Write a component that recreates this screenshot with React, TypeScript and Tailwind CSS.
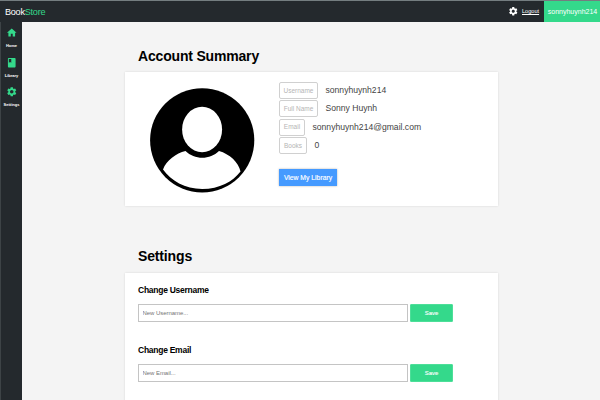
import { MdBook, MdHome, MdSettings } from "react-icons/md";

const nav = [
  { label: "Home", Icon: MdHome },
  { label: "Library", Icon: MdBook },
  { label: "Settings", Icon: MdSettings },
];

const details = [
  { label: "Username", value: "sonnyhuynh214", box: "w-[39px]" },
  { label: "Full Name", value: "Sonny Huynh", box: "w-[39px]" },
  { label: "Email", value: "sonnyhuynh214@gmail.com", box: "w-[26px]" },
  { label: "Books", value: "0", box: "w-[28px]" },
];

function Avatar() {
  return (
    <svg viewBox="0 0 105 105" className="ml-[25px] mt-[16px] size-[105px] shrink-0">
      <circle cx="52.2" cy="52.3" r="52.1" fill="#000" />
      <ellipse cx="52.1" cy="41.5" rx="20" ry="22.7" fill="#fff" />
      <path
        d="M35.5 63 C26 65.5 16.5 72 13 81.5 C21 92.5 35 101 52.2 101 C69.5 101 83 93.5 90.5 83.5 C88.5 74 79.5 66 69 63 C60 72 44.5 72 35.5 63 Z"
        fill="#fff"
      />
    </svg>
  );
}

function Field({ title, placeholder }: { title: string; placeholder: string }) {
  return (
    <div className="h-[60px]">
      <h2 className="h-[19px] whitespace-nowrap text-[8.5px] font-bold leading-[10px] tracking-[-0.26px]">
        {title}
      </h2>
      <div className="flex gap-[2px]">
        <input
          className="h-[18px] w-[270px] border border-[#c4c4c4] bg-white px-[3.5px] text-[6px] tracking-[-0.05px] placeholder:text-[#757575]"
          placeholder={placeholder}
        />
        <button className="h-[18px] w-[43px] rounded-[1px] border border-[#4ddf99] bg-[#34d98b] text-[6px] text-white [-webkit-text-stroke:0.1px_white]">
          Save
        </button>
      </div>
    </div>
  );
}

export default function App() {
  return (
    <div className="flex h-[400px] w-[600px] flex-col overflow-hidden bg-[#f4f4f4] font-['Liberation_Sans',Arial,sans-serif] text-black">
      <header className="flex h-[22px] shrink-0 items-center border-t border-[#747d80] bg-[#24292d] text-white">
        <div className="ml-[5px] text-[9.1px] leading-[20px] tracking-[-0.25px]">
          Book<span className="text-[#34d98b]">Store</span>
        </div>
        <div className="ml-auto flex h-full items-center">
          <MdSettings className="mr-[4px] size-[10.5px]" />
          <a className="mr-[4px] w-[18px] whitespace-nowrap text-[5.6px] underline">Logout</a>
          <div className="flex h-full w-[56px] items-center justify-center bg-[#34d98b] pl-px pt-px text-[7px]">
            sonnyhuynh214
          </div>
        </div>
      </header>
      <div className="flex min-h-0 flex-1">
        <nav className="flex w-[22px] shrink-0 flex-col items-center border-l border-[#3d4346] bg-[#24292d] pt-[5px] text-white">
          {nav.map(({ label, Icon }) => (
            <div key={label} className="flex h-[29.6px] flex-col items-center">
              <Icon className="size-[11.5px] text-[#34d98b]" />
              <span className="mt-[4.5px] text-[4px] font-bold leading-[5px]">{label}</span>
            </div>
          ))}
        </nav>
        <main className="ml-[103px] flex w-[373px] flex-col">
          <h1 className="ml-[13px] mt-[25px] h-[25px] shrink-0 whitespace-nowrap text-[14px] font-bold leading-[18px] tracking-[-0.18px]">
            Account Summary
          </h1>
          <section className="flex h-[134px] shrink-0 bg-white shadow-[0_0_2px_rgba(0,0,0,0.12)]">
            <Avatar />
            <div className="ml-[24px] mt-[10px] flex flex-col items-start">
              {details.map(({ label, value, box }) => (
                <div key={label} className="flex h-[18.4px] items-start">
                  <span
                    className={`${box} flex h-[17px] shrink-0 items-center justify-center whitespace-nowrap rounded-[2px] border border-[#d0d0d0] text-[6.5px] text-[#b5b5b5]`}
                  >
                    {label}
                  </span>
                  <span className="ml-[7.5px] text-[8.6px] leading-[16px] text-[#444]">{value}</span>
                </div>
              ))}
              <button className="mt-[13.4px] h-[17px] w-[58px] whitespace-nowrap bg-[#459aff] pt-px text-[6.8px] text-white shadow-[0_0_2px_rgba(0,0,0,0.3)] [-webkit-text-stroke:0.15px_white]">
                View My Library
              </button>
            </div>
          </section>
          <h1 className="ml-[13px] mt-[41px] h-[26px] shrink-0 whitespace-nowrap text-[14px] font-bold leading-[18px] tracking-[-0.15px]">
            Settings
          </h1>
          <section className="h-[180px] shrink-0 bg-white pl-[13px] pt-[12px] shadow-[0_0_2px_rgba(0,0,0,0.12)]">
            <Field title="Change Username" placeholder="New Username..." />
            <Field title="Change Email" placeholder="New Email..." />
          </section>
        </main>
      </div>
    </div>
  );
}
